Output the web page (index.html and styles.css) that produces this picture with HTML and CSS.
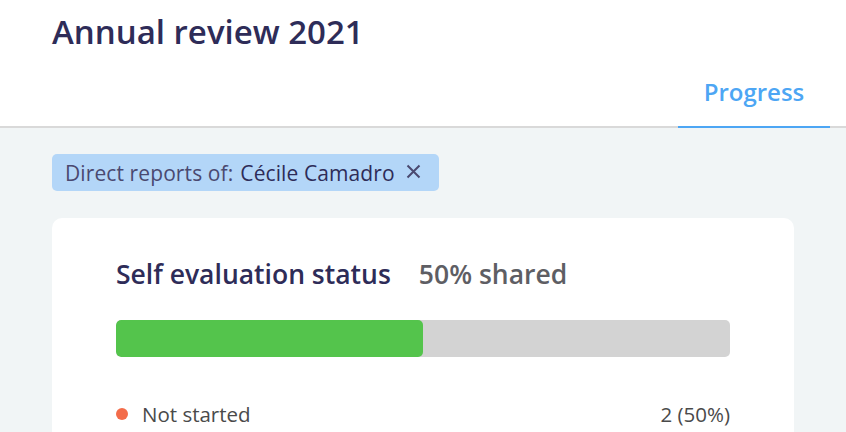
FILE: index.html
```html
<!DOCTYPE html>
<html>
<head>
<meta charset="utf-8">
<link rel="stylesheet" href="styles.css">
</head>
<body>
<header class="header">
  <h1 class="title">Annual review 2021</h1>
  <nav class="tabs">
    <a class="tab tab-active">Progress</a>
  </nav>
</header>
<main class="main">
  <div class="chip">
    <span class="chip-label">Direct reports of:</span>
    <span class="chip-value">Cécile Camadro</span>
    <svg class="chip-close" width="15" height="15" viewBox="0 0 15 15"><path d="M1.5 1.5 L13.5 13.5 M13.5 1.5 L1.5 13.5" stroke="#4a4970" stroke-width="2" stroke-linecap="butt"/></svg>
  </div>
  <section class="card">
    <div class="card-head">
      <h2 class="card-title">Self evaluation status</h2>
      <span class="card-sub">50% shared</span>
    </div>
    <div class="bar"><div class="bar-fill" style="width:50%"></div></div>
    <ul class="legend">
      <li class="legend-row">
        <span class="dot dot-orange"></span>
        <span class="legend-label">Not started</span>
        <span class="legend-value">2 (50%)</span>
      </li>
    </ul>
  </section>
</main>
</body>
</html>
```
FILE: styles.css
```css
* { box-sizing: border-box; }
html, body { margin: 0; padding: 0; }
body {
  background: #f1f5f6;
  font-family: "Open Sans", "Liberation Sans", sans-serif;
  width: 846px;
  height: 432px;
  overflow: hidden;
}
.header {
  background: #ffffff;
  height: 128px;
  border-bottom: 2px solid #d9d9d9;
  display: flex;
  flex-direction: column;
  justify-content: space-between;
  padding-left: 52px;
  padding-right: 16px;
}
.title {
  margin: 0;
  padding-top: 12px;
  font-size: 33px;
  line-height: 40px;
  font-weight: 600;
  color: #2e2c58;
}
.tabs {
  display: flex;
  justify-content: flex-end;
  margin-bottom: -2px;
}
.tab {
  width: 152px;
  height: 52px;
  display: flex;
  align-items: center;
  justify-content: center;
  padding-bottom: 20px;
  font-size: 24px;
  font-weight: 600;
  color: #4da6f4;
  border-bottom: 2px solid #4da6f4;
}
.main {
  padding: 26px 52px 0;
}
.chip {
  display: inline-flex;
  align-items: center;
  height: 37px;
  padding: 0 18px 0 13px;
  background: #b3d6f8;
  border-radius: 5px;
  font-size: 21px;
  letter-spacing: 0.1px;
  color: #4a4970;
}
.chip-label { margin-right: 7px; }
.chip-value { color: #2e2c58; }
.chip-close { margin-left: 11px; margin-top: -2px; }
.card {
  margin-top: 27px;
  width: 742px;
  height: 240px;
  background: #ffffff;
  border-radius: 10px;
  padding: 38px 64px 0;
}
.card-head {
  display: flex;
  align-items: baseline;
  gap: 28px;
}
.card-title {
  margin: 0;
  font-size: 26.5px;
  line-height: 32px;
  font-weight: 600;
  color: #2e2c58;
}
.card-sub {
  font-size: 26.5px;
  font-weight: 600;
  color: #5e5e64;
}
.bar {
  margin-top: 28px;
  height: 37px;
  background: #d3d3d3;
  border-radius: 5px;
  overflow: hidden;
}
.bar-fill {
  height: 100%;
  background: #54c44c;
  border-radius: 5px;
}
.legend {
  list-style: none;
  margin: 44px 0 0;
  padding: 0;
}
.legend-row {
  display: flex;
  align-items: center;
  font-size: 20.5px;
  line-height: 26px;
  color: #4a4a4a;
}
.dot {
  width: 12px;
  height: 12px;
  border-radius: 50%;
  margin-right: 14px;
}
.dot-orange { background: #f36c4a; }
.legend-label { flex: 1; }
.legend-value { color: #4a4a4a; }
```
